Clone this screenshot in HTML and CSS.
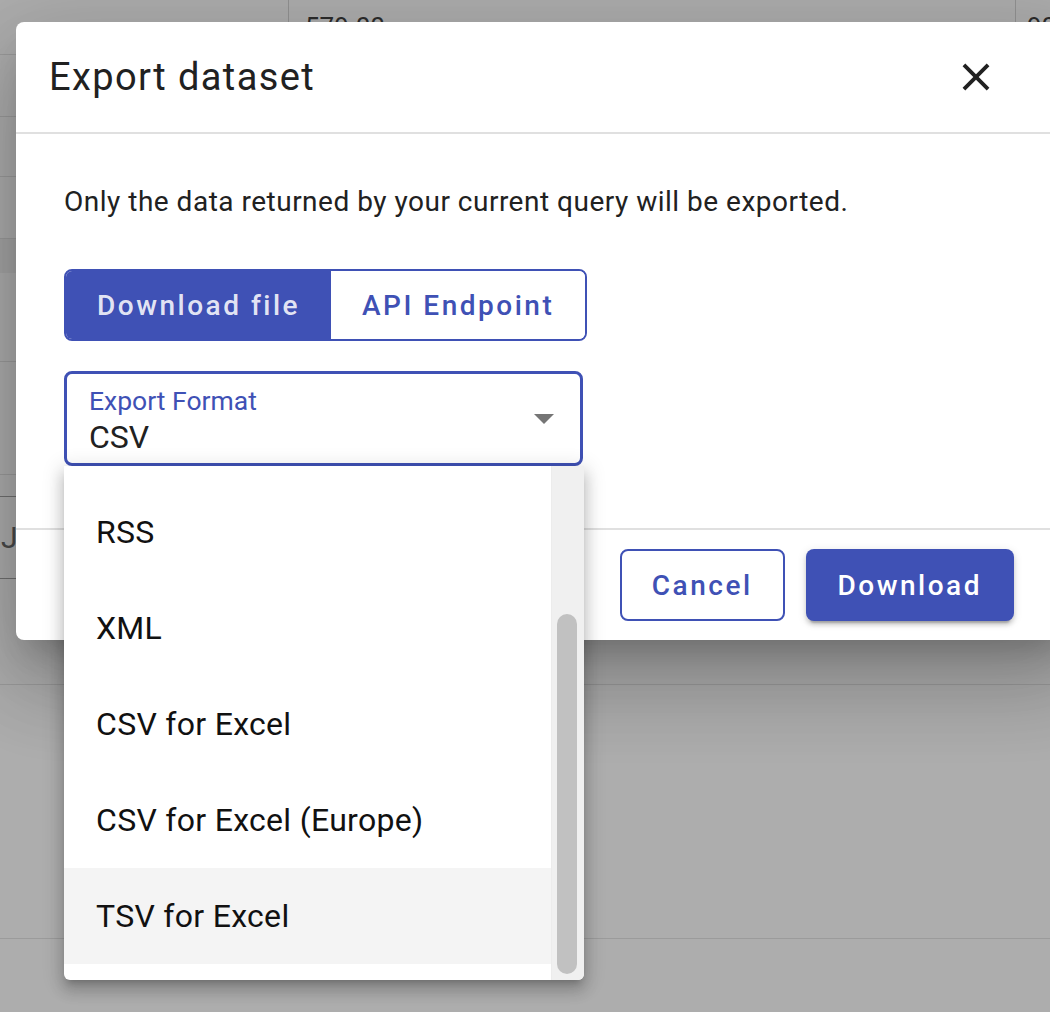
FILE: index.html
```html
<!DOCTYPE html>
<html lang="en">
<head>
<meta charset="utf-8">
<title>Export dataset</title>
<link rel="stylesheet" href="styles.css">
</head>
<body>
<div class="page">
  <div class="bg-row r1">
    <div class="cell c1"></div>
    <div class="cell c2">579.00</div>
    <div class="cell c3">90</div>
  </div>
  <div class="bg-row r2"></div>
  <div class="bg-row r3"></div>
  <div class="bg-row r4"></div>
  <div class="bg-row band"></div>
  <div class="bg-row r5"></div>
  <div class="bg-row r6"></div>
  <div class="bg-row r7 dark"></div>
  <div class="bg-row r8 dark"><span class="cut-text">J</span></div>
  <div class="bg-row r9"></div>
  <div class="bg-row r10"></div>
</div>

<div class="dialog" role="dialog" aria-label="Export dataset">
  <div class="dlg-header">
    <h2 class="dlg-title">Export dataset</h2>
    <button class="icon-btn" aria-label="Close">
      <svg viewBox="0 0 24 24" width="46" height="46"><path d="M19 6.41L17.59 5 12 10.59 6.41 5 5 6.41 10.59 12 5 17.59 6.41 19 12 13.41 17.59 19 19 17.59 13.41 12z"/></svg>
    </button>
  </div>
  <div class="dlg-body">
    <p class="note">Only the data returned by your current query will be exported.</p>
    <div class="toggle">
      <button class="seg on">Download file</button>
      <button class="seg">API Endpoint</button>
    </div>
    <div class="select">
      <div class="select-text">
        <span class="label">Export Format</span>
        <span class="value">CSV</span>
      </div>
      <span class="arrow"></span>
    </div>
  </div>
  <div class="dlg-footer">
    <button class="btn outline">Cancel</button>
    <button class="btn raised">Download</button>
  </div>
</div>

<div class="menu" role="listbox">
  <div class="menu-list">
    <div class="item">RSS</div>
    <div class="item">XML</div>
    <div class="item">CSV for Excel</div>
    <div class="item">CSV for Excel (Europe)</div>
    <div class="item active">TSV for Excel</div>
  </div>
  <div class="menu-track"><div class="thumb"></div></div>
</div>
</body>
</html>
```

FILE: styles.css
```css
* { box-sizing: border-box; }

html, body {
  margin: 0;
  padding: 0;
  width: 1050px;
  height: 1012px;
  overflow: hidden;
}

body {
  background: #adadad;
  font-family: Roboto, "Liberation Sans", sans-serif;
  color: #212121;
  position: relative;
}

/* ---------- dimmed page behind the dialog ---------- */
.page {
  display: flex;
  flex-direction: column;
}

.bg-row {
  border-bottom: 1px solid #9b9b9b;
  flex: none;
}

.bg-row.dark { border-bottom-color: #707070; }

.r1 {
  height: 55px;
  display: grid;
  grid-template-columns: 288px 727px 35px;
}

.cell {
  font-size: 26px;
  line-height: 54px;
  color: #2c2c2c;
  padding-left: 16px;
  white-space: nowrap;
  overflow: hidden;
}

.c2, .c3 { border-left: 1px solid #929292; }
.c3 { padding-left: 11px; }

.r2 { height: 62px; }
.r3 { height: 60px; }
.r4 { height: 62px; }
.band { height: 34px; background: #a5a5a5; border-bottom: none; }
.r5 { height: 89px; }
.r6 { height: 113px; }
.r7 { height: 22px; }
.r8 { height: 82px; display: flex; align-items: center; }
.r9 { height: 106px; }
.r10 { height: 254px; }

.cut-text {
  font-size: 30px;
  color: #4a4a4a;
  padding-left: 1px;
}

/* ---------- dialog ---------- */
.dialog {
  position: absolute;
  left: 16px;
  top: 22px;
  width: 1060px;
  background: #fff;
  border-radius: 8px;
  box-shadow: 0 22px 30px -14px rgba(0,0,0,.2),
              0 48px 76px 6px rgba(0,0,0,.14),
              0 18px 92px 16px rgba(0,0,0,.12);
}

.dlg-header {
  height: 112px;
  display: flex;
  align-items: center;
  justify-content: space-between;
  padding: 0 77px 0 33px;
  border-bottom: 2px solid #e0e0e0;
}

.dlg-title {
  margin: 0;
  font-size: 38px;
  font-weight: 400;
  line-height: 48px;
  color: #212121;
  letter-spacing: 1.4px;
}

.icon-btn {
  width: 46px;
  height: 46px;
  padding: 0;
  border: 0;
  background: none;
  display: flex;
}

.icon-btn svg { fill: #212121; }

.dlg-body {
  padding: 48px 0 62px 48px;
}

.note {
  margin: 0 0 47px;
  font-size: 28px;
  line-height: 40px;
  letter-spacing: 0.5px;
  color: #212121;
}

.toggle {
  display: inline-flex;
  height: 72px;
  border: 2px solid #3f51b5;
  border-radius: 8px;
  overflow: hidden;
}

.seg {
  border: 0;
  margin: 0;
  padding: 0 31px;
  background: #fff;
  color: #3f51b5;
  font-family: Roboto, "Liberation Sans", sans-serif;
  font-size: 28px;
  font-weight: 500;
  letter-spacing: 2.5px;
}

.seg.on {
  background: #3f51b5;
  color: rgba(255,255,255,.87);
}

.select {
  margin-top: 30px;
  width: 519px;
  height: 95px;
  border: 3px solid #3f51b5;
  border-radius: 8px;
  display: flex;
  align-items: center;
  justify-content: space-between;
  padding: 0 26px 0 22px;
}

.select-text {
  display: flex;
  flex-direction: column;
  align-self: flex-start;
  padding-top: 11px;
}

.label {
  font-size: 26.5px;
  line-height: 32px;
  color: #3f51b5;
}

.value {
  font-size: 32px;
  line-height: 40px;
  color: #212121;
}

.arrow {
  width: 0;
  height: 0;
  border-left: 10px solid transparent;
  border-right: 10px solid transparent;
  border-top: 10px solid #757575;
}

.dlg-footer {
  display: flex;
  justify-content: flex-end;
  gap: 21px;
  padding: 19px 62px 19px 0;
  border-top: 2px solid #e0e0e0;
}

.btn {
  height: 72px;
  border-radius: 8px;
  font-family: Roboto, "Liberation Sans", sans-serif;
  font-size: 28px;
  font-weight: 500;
  letter-spacing: 2.5px;
  margin: 0;
}

.btn.outline {
  background: #fff;
  color: #3f51b5;
  border: 2px solid #3f51b5;
  padding: 0 30px;
}

.btn.raised {
  background: #3f51b5;
  color: #fff;
  border: 0;
  padding: 0 32px;
  box-shadow: 0 6px 2px -4px rgba(0,0,0,.2),
              0 4px 4px 0 rgba(0,0,0,.14),
              0 2px 10px 0 rgba(0,0,0,.12);
}

/* ---------- open select panel ---------- */
.menu {
  position: absolute;
  left: 64px;
  top: 466px;
  width: 520px;
  height: 514px;
  background: #fff;
  border-radius: 0 0 6px 6px;
  display: flex;
  overflow: hidden;
  box-shadow: 0 6px 6px -4px rgba(0,0,0,.2),
              0 10px 14px 2px rgba(0,0,0,.14),
              0 4px 20px 4px rgba(0,0,0,.12);
}

.menu-list {
  flex: 1;
  padding-top: 18px;
}

.item {
  height: 96px;
  line-height: 96px;
  padding-left: 32px;
  font-size: 32px;
  letter-spacing: 0.3px;
  color: #111;
  white-space: nowrap;
}

.item.active { background: #f4f4f4; }

.menu-track {
  width: 33px;
  background: #f0f0f0;
  border-left: 1px solid #ececec;
  padding-left: 5px;
}

.thumb {
  margin-top: 148px;
  width: 20px;
  height: 360px;
  border-radius: 10px;
  background: #c1c1c1;
}
```
